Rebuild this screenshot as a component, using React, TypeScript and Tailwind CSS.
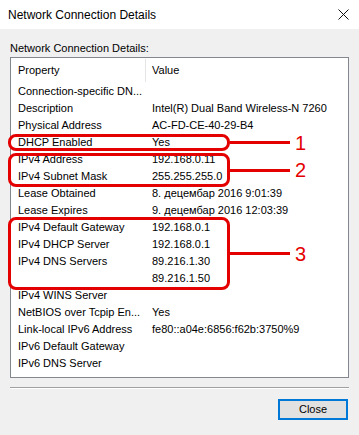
const rows: [string, string][] = [
  ["Connection-specific DN...", ""],
  ["Description", "Intel(R) Dual Band Wireless-N 7260"],
  ["Physical Address", "AC-FD-CE-40-29-B4"],
  ["DHCP Enabled", "Yes"],
  ["IPv4 Address", "192.168.0.11"],
  ["IPv4 Subnet Mask", "255.255.255.0"],
  ["Lease Obtained", "8. децембар 2016 9:01:39"],
  ["Lease Expires", "9. децембар 2016 12:03:39"],
  ["IPv4 Default Gateway", "192.168.0.1"],
  ["IPv4 DHCP Server", "192.168.0.1"],
  ["IPv4 DNS Servers", "89.216.1.30"],
  ["", "89.216.1.50"],
  ["IPv4 WINS Server", ""],
  ["NetBIOS over Tcpip En...", "Yes"],
  ["Link-local IPv6 Address", "fe80::a04e:6856:f62b:3750%9"],
  ["IPv6 Default Gateway", ""],
  ["IPv6 DNS Server", ""],
];

function Callout({ top, height, label }: { top: number; height: number; label: string }) {
  return (
    <div className="absolute left-[8px] flex items-center" style={{ top, height }}>
      <div className="w-[222px] h-full rounded-[8px] border-[3px] border-[#e50000]" />
      <div className="w-[60px] h-[3px] bg-[#e50000]" />
      <span className="ml-[5px] text-[20px] leading-none text-[#e50000]">{label}</span>
    </div>
  );
}

export default function App() {
  return (
    <div className="relative w-[359px] h-[435px] bg-[#f0f0f0] text-[11px] text-black overflow-hidden [font-family:'Liberation_Sans',Arial,sans-serif]">
      <div className="h-[29px] bg-white flex items-center justify-between pl-[8px] pr-[10px]">
        <span className="text-[12px]">Network Connection Details</span>
        <svg width="11" height="11" viewBox="0 0 11 11">
          <path d="M0.5 0.5 L10.5 10.5 M10.5 0.5 L0.5 10.5" stroke="#111" strokeWidth="1" />
        </svg>
      </div>

      <div className="px-[10px] pt-[10px]">
        <div className="h-[18px] leading-[18px]">Network Connection Details:</div>
        <div className="w-[339px] h-[321px] border border-[#828790] bg-white">
          <div className="flex h-[25px] items-center">
            <div className="w-[134px] pl-[7px]">Property</div>
            <div className="w-px h-[23px] bg-[#e5e5e5]" />
            <div className="pl-[6px]">Value</div>
          </div>
          <div className="flex flex-col">
            {rows.map(([k, v], i) => (
              <div key={i} className="flex h-[17px] items-center whitespace-nowrap">
                <div className="w-[141px] pl-[7px]">{k}</div>
                <div>{v}</div>
              </div>
            ))}
          </div>
        </div>
        <div className="mt-[9px] h-px bg-[#a0a0a0] border-b border-white box-content" />
        <div className="flex justify-end mt-[10px] pr-[1px]">
          <button className="w-[70px] h-[21px] bg-[#e1e1e1] border-2 border-[#0078d7] text-[11px] leading-none">
            Close
          </button>
        </div>
      </div>

      <Callout top={134} height={17} label="1" />
      <Callout top={153} height={34} label="2" />
      <Callout top={217} height={73} label="3" />
    </div>
  );
}
